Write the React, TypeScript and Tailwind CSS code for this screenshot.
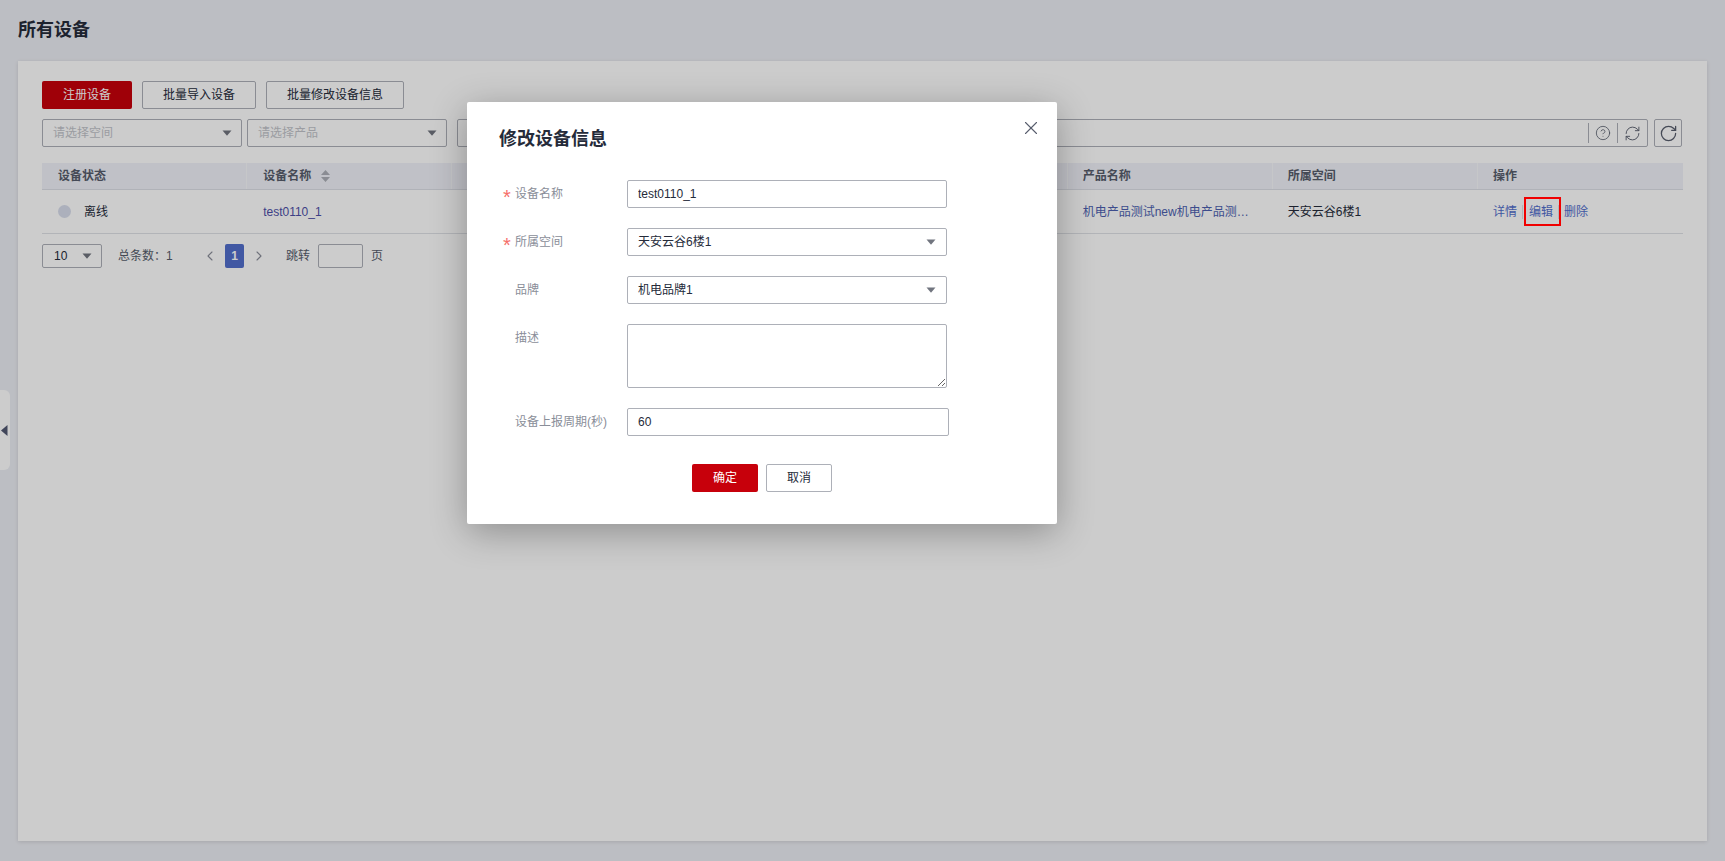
import React from 'react';
import { CircleHelp, RefreshCw, RotateCw, X, ChevronLeft, ChevronRight } from 'lucide-react';

function Caret({ className = '' }: { className?: string }) {
  return (
    <svg width="10" height="6" viewBox="0 0 10 6" className={className}>
      <path d="M0.5 0.5h9L5 5.8z" fill="#71757f" />
    </svg>
  );
}

function FilterSelect({ placeholder }: { placeholder: string }) {
  return (
    <div className="flex h-[28px] w-[200px] items-center justify-between rounded-[2px] border border-[#adb0b8] bg-white pl-[10px] pr-[9px] text-[#c2c4ca]">
      <span>{placeholder}</span>
      <Caret />
    </div>
  );
}

function OutlineButton({ children, width }: { children: React.ReactNode; width: string }) {
  return (
    <button className={'h-[28px] rounded-[2px] border border-[#adb0b8] bg-white text-[#252b3a] ' + width}>
      {children}
    </button>
  );
}

function HeaderCell({ children, last, tight }: { children?: React.ReactNode; last?: boolean; tight?: boolean }) {
  return (
    <div className={'flex h-[26px] items-center font-bold text-[#575d6c] ' + (tight ? 'pl-[15px] ' : 'pl-[16px] ') + (last ? '' : 'border-r border-[#f8f9fc]')}>
      {children}
    </div>
  );
}

function FormRow({ label, required, children }: { label: string; required?: boolean; children: React.ReactNode }) {
  return (
    <div className="mb-[20px] flex h-[28px] items-center">
      <span className="h-[28px] w-[12px] pt-[5px] text-[20px] leading-[24px] text-[#f66f6a]">{required ? '*' : ''}</span>
      <span className="w-[112px] text-[#8a8e99]">{label}</span>
      {children}
    </div>
  );
}

function ModalSelect({ value }: { value: string }) {
  return (
    <div className="flex h-[28px] w-[320px] items-center justify-between rounded-[2px] border border-[#adb0b8] pl-[10px] pr-[10px] text-[#252b3a]">
      <span>{value}</span>
      <Caret />
    </div>
  );
}

export default function App() {
  return (
    <div className={'relative h-[861px] w-[1725px] overflow-hidden bg-[#eceef4] font-["Liberation_Sans","Noto_Sans_CJK_SC",sans-serif] text-[12px] text-[#252b3a]'}>
      <div className="flex h-[61px] items-center pl-[18px] text-[18px] font-bold">所有设备</div>

      <div className="mx-[18px] h-[780px] bg-white px-[24px] pt-[20px] shadow-[0_1px_4px_rgba(0,0,0,0.12)]">
        <div className="flex gap-[10px]">
          <button className="h-[28px] w-[90px] rounded-[2px] bg-[#c7000b] text-white">注册设备</button>
          <OutlineButton width="w-[114px]">批量导入设备</OutlineButton>
          <OutlineButton width="w-[138px]">批量修改设备信息</OutlineButton>
        </div>

        <div className="mt-[10px] flex h-[28px] items-center">
          <FilterSelect placeholder="请选择空间" />
          <div className="ml-[5px]">
            <FilterSelect placeholder="请选择产品" />
          </div>
          <div className="ml-[10px] flex h-[28px] w-[1191px] items-center justify-end rounded-[2px] border border-[#adb0b8] bg-white text-[#575d6c]">
            <span className="h-[20px] border-l border-[#adb0b8]" />
            <span className="flex w-[28px] justify-center">
              <CircleHelp size={16} strokeWidth={1.2} />
            </span>
            <span className="h-[20px] border-l border-[#adb0b8]" />
            <span className="flex w-[29px] justify-center">
              <RefreshCw size={17} strokeWidth={1.3} />
            </span>
          </div>
          <button className="ml-[6px] flex h-[28px] w-[28px] items-center justify-center rounded-[2px] border border-[#adb0b8] bg-white text-[#575d6c]">
            <RotateCw size={19} strokeWidth={1.6} />
          </button>
        </div>

        <div className="mt-[16px]">
          <div className="grid grid-cols-8 border-b border-[#dcdfe7] bg-[#f0f2f9]">
            <HeaderCell>设备状态</HeaderCell>
            <HeaderCell>
              设备名称
              <svg width="9" height="12" viewBox="0 0 9 12" className="ml-[10px]">
                <path d="M4.5 0l4.5 5H0zM4.5 12L0 7h9z" fill="#adb0b8" />
              </svg>
            </HeaderCell>
            <HeaderCell />
            <HeaderCell />
            <HeaderCell />
            <HeaderCell tight>产品名称</HeaderCell>
            <HeaderCell tight>所属空间</HeaderCell>
            <HeaderCell tight last>操作</HeaderCell>
          </div>
          <div className="grid h-[44px] grid-cols-8 items-center border-b border-[#dfe1e6]">
            <div className="flex items-center pl-[16px]">
              <span className="h-[13px] w-[13px] rounded-full bg-[#d8ddec]" />
              <span className="ml-[13px]">离线</span>
            </div>
            <div className="pl-[16px] text-[#4d4fa8]">test0110_1</div>
            <div />
            <div />
            <div />
            <div className="truncate pl-[15px] pr-[14px] text-[#4d5fb0]">机电产品测试new机电产品测试new</div>
            <div className="pl-[15px]">天安云谷6楼1</div>
            <div className="flex items-center pl-[15px] text-[#526ecc]">
              <span>详情</span>
              <span className="mx-[5px] h-[14px] border-l border-[#dfe1e6]" />
              <span className="ml-[1px]">编辑</span>
              <span className="mx-[5px] h-[14px] border-l border-[#dfe1e6]" />
              <span>删除</span>
            </div>
          </div>
        </div>

        <div className="mt-[10px] flex h-[24px] items-center text-[#575d6c]">
          <div className="flex h-[24px] w-[60px] items-center justify-between rounded-[2px] border border-[#adb0b8] pl-[11px] pr-[9px] text-[#252b3a]">
            <span>10</span>
            <Caret />
          </div>
          <span className="ml-[16px] w-[84px]">总条数：1</span>
          <ChevronLeft size={16} strokeWidth={1.6} className="text-[#8a8e99]" />
          <span className="ml-[7px] flex h-[24px] w-[19px] items-center justify-center rounded-[2px] bg-[#526ecc] font-bold text-white">1</span>
          <ChevronRight size={16} strokeWidth={1.6} className="ml-[7px] text-[#8a8e99]" />
          <span className="ml-[19px]">跳转</span>
          <span className="ml-[8px] h-[24px] w-[45px] rounded-[2px] border border-[#adb0b8]" />
          <span className="ml-[8px]">页</span>
        </div>
      </div>

      <div className="absolute left-0 top-[390px] h-[80px] w-[10px] rounded-r-[6px] bg-white" />

      {/* dialog mask */}
      <div className="absolute inset-0 bg-black/20" />

      <div className="absolute left-[1524px] top-[197px] h-[29px] w-[37px] border-2 border-[#f00000]" />

      <svg width="7" height="11" viewBox="0 0 7 11" className="absolute left-[1px] top-[425px]">
        <path d="M6.5 0v11L0 5.5z" fill="#41465a" />
      </svg>

      <div className="absolute left-[467px] top-[102px] h-[422px] w-[590px] rounded-[2px] bg-white px-[36px] shadow-[0_8px_36px_rgba(0,0,0,0.3)]">
        <button className="absolute right-[15px] top-[15px] text-[#575d6c]">
          <X size={22} strokeWidth={1.2} />
        </button>
        <div className="flex h-[78px] items-center text-[18px] font-bold">
          <span className="ml-[-4px] mt-[-4px]">修改设备信息</span>
        </div>
        <FormRow label="设备名称" required>
          <input
            defaultValue="test0110_1"
            className="h-[28px] w-[320px] rounded-[2px] border border-[#adb0b8] px-[10px] outline-none"
          />
        </FormRow>
        <FormRow label="所属空间" required>
          <ModalSelect value="天安云谷6楼1" />
        </FormRow>
        <FormRow label="品牌">
          <ModalSelect value="机电品牌1" />
        </FormRow>
        <div className="mb-[20px] flex h-[64px]">
          <span className="w-[12px]" />
          <span className="w-[112px] pt-[5px] text-[#8a8e99]">描述</span>
          <textarea className="block h-[64px] w-[320px] resize rounded-[2px] border border-[#adb0b8] px-[10px] outline-none" />
        </div>
        <FormRow label="设备上报周期(秒)">
          <input
            defaultValue="60"
            className="h-[28px] w-[322px] rounded-[2px] border border-[#adb0b8] px-[10px] outline-none"
          />
        </FormRow>
        <div className="mt-[28px] flex justify-center gap-[8px]">
          <button className="h-[28px] w-[66px] rounded-[2px] bg-[#c7000b] text-white">确定</button>
          <button className="h-[28px] w-[66px] rounded-[2px] border border-[#adb0b8]">取消</button>
        </div>
      </div>
    </div>
  );
}
